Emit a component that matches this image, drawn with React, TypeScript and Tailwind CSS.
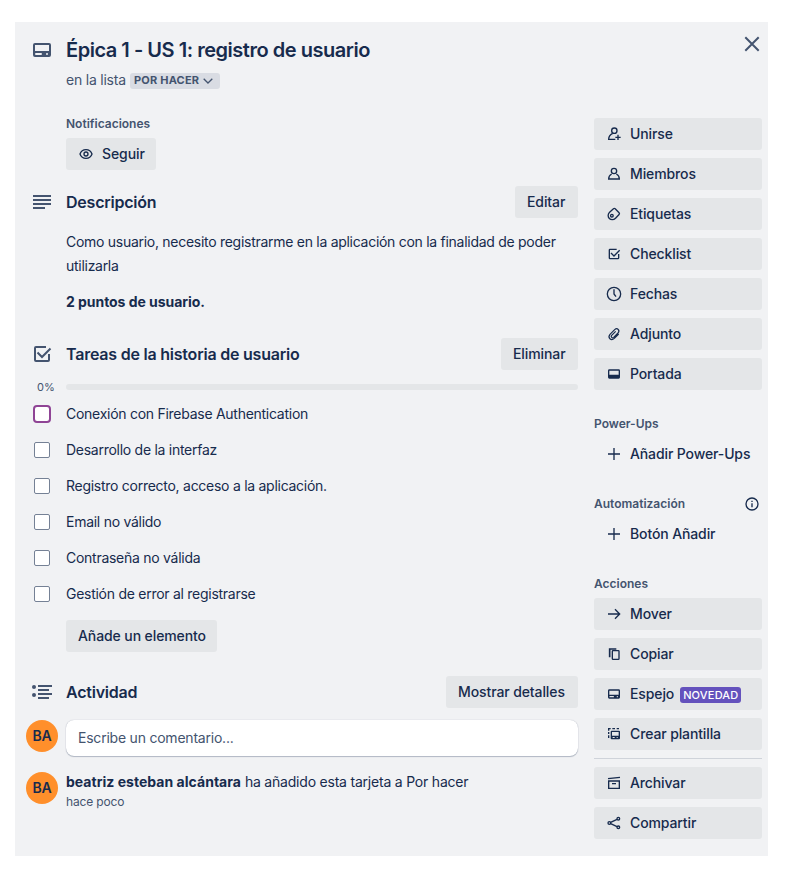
import type { ReactNode } from "react";

function Icon({ children, className = "size-4" }: { children: ReactNode; className?: string }) {
  return (
    <svg viewBox="0 0 24 24" fill="none" stroke="currentColor" strokeWidth="2" className={`shrink-0 ${className}`}>
      {children}
    </svg>
  );
}

const cardShape = (
  <path
    stroke="none"
    fill="currentColor"
    fillRule="evenodd"
    d="M5 5h14a2 2 0 0 1 2 2v10a2 2 0 0 1-2 2H5a2 2 0 0 1-2-2V7a2 2 0 0 1 2-2Zm0 2v6h14V7H5Zm1 8a1 1 0 0 0 0 2h5a1 1 0 0 0 0-2H6Zm11 0a1 1 0 1 0 0 2 1 1 0 0 0 0-2Z"
  />
);
const checkShape = (
  <>
    <path d="M16 5H6a1 1 0 0 0-1 1v12a1 1 0 0 0 1 1h12a1 1 0 0 0 1-1v-6" />
    <path d="M7.500 10.500l4.500 4.500 8.500-8.500" />
  </>
);
const icons = {
  join: (
    <>
      <circle cx="12.500" cy="7" r="4" />
      <path d="M14 20H4c0-4 2-7 6-9M18 13v8M14 17h8" />
    </>
  ),
  member: (
    <>
      <circle cx="12" cy="7.500" r="4" />
      <path d="M8.500 12C5.500 13.500 4 16 4 19.500h16c0-3.500-1.500-6-4.500-7.500" />
    </>
  ),
  tag: (
    <>
      <path d="M11.200 4.200q1.300-1.200 2.600 0l5.800 6q1.200 1.300 0 2.600l-5.300 5.500c-3 3-7 2.700-9.300.4s-2.600-6.500.4-9.300Z" />
      <circle cx="8.800" cy="14.500" r="2" />
    </>
  ),
  check: checkShape,
  clock: (
    <>
      <circle cx="12" cy="12" r="10" />
      <path d="M12 5v7l3 4" />
    </>
  ),
  clip: <path d="M19 12l-6.500 6.500c-5 4.500-10.500-1-6.500-6l7-7c4-3.500 8.500 1 5 5l-6.500 6.500c-2 1.800-5-.8-3-3l6-6" strokeWidth="1.800" />,
  cover: (
    <path stroke="none" fill="currentColor" fillRule="evenodd" d="M5 5h14a2 2 0 0 1 2 2v10a2 2 0 0 1-2 2H5a2 2 0 0 1-2-2V7a2 2 0 0 1 2-2Zm0 2v6h14V7H5Z" />
  ),
  plus: <path d="M12 3v18M3 12h18" />,
  arrow: <path d="M3 12h17M13.500 5l7 7-7 7" />,
  copy: (
    <>
      <rect x="9.500" y="7" width="10" height="13" rx="1" />
      <path d="M5.500 17V4.500h10" strokeWidth="2.500" />
    </>
  ),
  mirror: cardShape,
  template: (
    <>
      <path
        stroke="none"
        fill="currentColor"
        fillRule="evenodd"
        d="M8.500 7h11A1.500 1.500 0 0 1 21 8.500v10a1.500 1.500 0 0 1-1.500 1.500h-11A1.500 1.500 0 0 1 7 18.500v-10A1.500 1.500 0 0 1 8.500 7ZM9 9v5.500h10V9H9Zm1 7.500v1.500h3v-1.500h-3Zm6 0v1.500h1.500v-1.500H16Z"
      />
      <path d="M4 18v-4M4 12V9M4 7V4h3M9.500 4h4M16 4h3.500" />
    </>
  ),
  archive: (
    <>
      <path d="M4 9h16v11H4ZM9 13h6" />
      <path d="M3 5.500l18-2" />
    </>
  ),
  share: (
    <>
      <circle cx="5" cy="12" r="2" />
      <circle cx="18.500" cy="5.500" r="2" />
      <circle cx="18.500" cy="18.500" r="2" />
      <path d="M7 11l9.500-4.500M7 13l9.500 4.500" />
    </>
  ),
};

type IconName = keyof typeof icons;

function SideButton({ icon, label, badge, plain = false }: { icon: IconName; label: string; badge?: string; plain?: boolean }) {
  return (
    <button className={`flex h-8 w-full items-center rounded-[3px] pl-3 text-sm leading-5 font-medium ${plain ? "" : "bg-[#e4e6e8]"}`}>
      <Icon>{icons[icon]}</Icon>
      <span className="ml-2 tracking-[-0.12px] whitespace-nowrap">{label}</span>
      {badge && (
        <span className="mt-0.5 ml-1.5 flex h-4 items-center rounded-[3px] bg-[#6452bd] px-[3px] text-[11px] font-medium tracking-[0.18px] text-white">{badge}</span>
      )}
    </button>
  );
}

function Button({ children, className }: { children: ReactNode; className: string }) {
  return (
    <button className={`flex h-8 items-center rounded-[3px] bg-[#e4e6e8] px-3 text-sm font-medium tracking-[-0.1px] whitespace-nowrap ${className}`}>
      {children}
    </button>
  );
}

function Section({ icon, title, action }: { icon: ReactNode; title: ReactNode; action: ReactNode }) {
  return (
    <div className="flex h-8 items-center">
      <Icon className="mr-3 size-6 text-[#44546f]">{icon}</Icon>
      <h2 className="flex-1 text-base font-semibold tracking-[-0.22px]">{title}</h2>
      {action}
    </div>
  );
}

function Avatar() {
  return <div className="mr-2 flex size-8 shrink-0 items-center justify-center rounded-full bg-[#ff8f2b] text-sm font-semibold tracking-[-0.2px]">BA</div>;
}

const tasks = [
  "Conexión con Firebase Authentication",
  "Desarrollo de la interfaz",
  "Registro correcto, acceso a la aplicación.",
  "Email no válido",
  "Contraseña no válida",
  "Gestión de error al registrarse",
];

const label = "text-xs leading-5 font-semibold text-[#44546f]";

export default function App() {
  return (
    <div className="h-[872px] w-[790px] bg-white pt-[22px] pl-[15px] font-['Inter','Liberation_Sans',sans-serif] text-sm text-[#172b4d]">
      <main className="h-[834px] w-[753px] bg-[#f1f2f4] pl-[15px]">
        <header className="flex h-24 pt-4">
          <Icon className="mr-3 size-6 text-[#44546f]">{cardShape}</Icon>
          <div className="flex-1">
            <h1 className="text-xl leading-6 font-semibold tracking-[-0.47px]">Épica 1 - US 1: registro de usuario</h1>
            <div className="mt-2 flex h-5 items-center text-[#44546f]">
              <span className="w-15 tracking-[-0.22px] whitespace-nowrap">en la lista</span>
              <span className="mt-0.5 ml-1 flex h-4 w-[90px] items-center gap-1 rounded-[3px] bg-[#d9dce3] pl-1 text-[11px] font-bold tracking-[0.2px]">
                POR HACER
                <svg viewBox="0 0 10 6" fill="none" stroke="currentColor" strokeWidth="1.300" className="h-1.5 w-2.5">
                  <path d="M.7.700l4.300 4.300L9.300.700" />
                </svg>
              </span>
            </div>
          </div>
          <Icon className="-mt-[6px] mr-1 size-6 text-[#44546f]">
            <path d="M5.300 5.300l13.400 13.400M18.700 5.300L5.300 18.700" />
          </Icon>
        </header>
        <div className="flex gap-4">
          <div className="w-[548px]">
            <div className="ml-9">
              <div className={`-mt-1 ${label}`}>Notificaciones</div>
              <Button className="mt-1 w-[90px] gap-2">
                <Icon>
                  <path d="M3 12c3-8.700 15-8.700 18 0-3 8.700-15 8.700-18 0Z" />
                  <circle cx="12" cy="12" r="3" />
                </Icon>
                Seguir
              </Button>
            </div>
            <div className="mt-4">
              <Section icon={<path d="M3 6h18M3 10h18M3 14h18M3 18h12" />} title="Descripción" action={<Button className="w-[63px]">Editar</Button>} />
            </div>
            <div className="mt-3 ml-9 leading-6">
              <p className="tracking-[-0.28px]">Como usuario, necesito registrarme en la aplicación con la finalidad de poder utilizarla</p>
              <p className="mt-3 font-bold tracking-[-0.05px]">2 puntos de usuario.</p>
            </div>
            <div className="mt-6">
              <Section icon={checkShape} title="Tareas de la historia de usuario" action={<Button className="w-[77px]">Eliminar</Button>} />
            </div>
            <div className="mt-2 flex h-[18px] items-center">
              <span className="w-9 pt-px pl-[7px] text-[11px] text-[#44546f]">0%</span>
              <div className="h-1.5 flex-1 rounded-[3px] bg-[#e4e6e8]" />
            </div>
            <ul>
              {tasks.map((task, i) => (
                <li key={task} className="flex h-9 items-center">
                  <span
                    className={
                      i === 0
                        ? "mr-[15px] ml-[3px] size-[18px] rounded-[4px] border-2 border-[#8f4495] bg-white"
                        : "mr-4 ml-1 size-4 rounded-[2px] border border-[#758195] bg-white"
                    }
                  />
                  <span className="tracking-[-0.27px]">{task}</span>
                </li>
              ))}
            </ul>
            <Button className="mt-2 ml-9 w-[151px]">Añade un elemento</Button>
            <div className="mt-6">
              <Section
                icon={
                  <>
                    <path d="M8 6h14M8 10h11M8 14h14M8 18h11" />
                    <g fill="currentColor" stroke="none">
                      <circle cx="4" cy="7" r="2" />
                      <circle cx="4" cy="15" r="2" />
                    </g>
                  </>
                }
                title="Actividad"
                action={<Button className="w-[132px]">Mostrar detalles</Button>}
              />
            </div>
            <div className="mt-3 -ml-1 flex">
              <Avatar />
              <div className="flex h-9 flex-1 items-center rounded-lg bg-white pl-3 tracking-[-0.22px] text-[#44546f] shadow-[0_1px_1px_#091e4240,0_0_1px_#091e424f]">
                Escribe un comentario...
              </div>
            </div>
            <div className="mt-4 -ml-1 flex">
              <Avatar />
              <div>
                <p className="leading-5">
                  <b className="tracking-[0.03px]">beatriz esteban alcántara</b> <span className="tracking-[-0.21px]">ha añadido esta tarjeta a Por hacer</span>
                </p>
                <p className="text-xs leading-5 tracking-[-0.15px] text-[#44546f]">hace poco</p>
              </div>
            </div>
          </div>
          <aside className="w-[168px]">
            <div className="space-y-2">
              <SideButton icon="join" label="Unirse" />
              <SideButton icon="member" label="Miembros" />
              <SideButton icon="tag" label="Etiquetas" />
              <SideButton icon="check" label="Checklist" />
              <SideButton icon="clock" label="Fechas" />
              <SideButton icon="clip" label="Adjunto" />
              <SideButton icon="cover" label="Portada" />
            </div>
            <h3 className={`mt-6 mb-1 ${label}`}>Power-Ups</h3>
            <SideButton plain icon="plus" label="Añadir Power-Ups" />
            <div className={`mt-6 mb-1 flex items-center justify-between pr-0.5 ${label}`}>
              <h3>Automatización</h3>
              <Icon className="size-4 text-[#172b4d]">
                <circle cx="12" cy="12" r="9" />
                <path d="M12 11v6M12 7v2" />
              </Icon>
            </div>
            <SideButton plain icon="plus" label="Botón Añadir" />
            <h3 className={`mt-6 mb-1 ${label}`}>Acciones</h3>
            <div className="space-y-2">
              <SideButton icon="arrow" label="Mover" />
              <SideButton icon="copy" label="Copiar" />
              <SideButton icon="mirror" label="Espejo" badge="NOVEDAD" />
              <SideButton icon="template" label="Crear plantilla" />
              <hr className="border-[#cfd3da]" />
              <SideButton icon="archive" label="Archivar" />
              <SideButton icon="share" label="Compartir" />
            </div>
          </aside>
        </div>
      </main>
    </div>
  );
}
